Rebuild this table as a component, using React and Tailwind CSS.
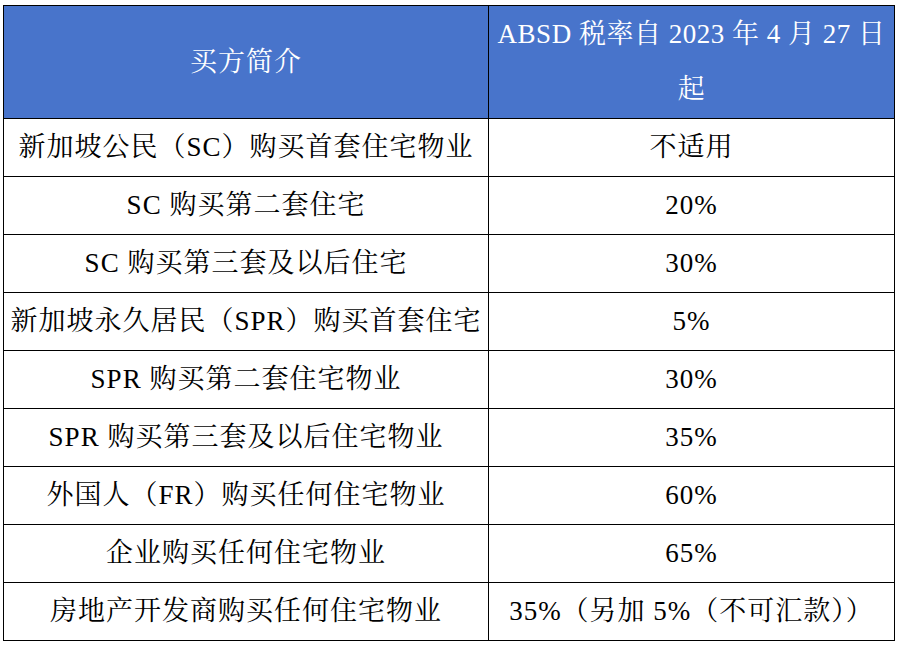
import React from 'react';

const rows = [
  ['新加坡公民（SC）购买首套住宅物业', '不适用'],
  ['SC 购买第二套住宅', '20%'],
  ['SC 购买第三套及以后住宅', '30%'],
  ['新加坡永久居民（SPR）购买首套住宅', '5%'],
  ['SPR 购买第二套住宅物业', '30%'],
  ['SPR 购买第三套及以后住宅物业', '35%'],
  ['外国人（FR）购买任何住宅物业', '60%'],
  ['企业购买任何住宅物业', '65%'],
  ['房地产开发商购买任何住宅物业', '35%（另加 5%（不可汇款））'],
];

export default function App() {
  return (
    <div className="w-[901px] h-[645px] bg-white pt-[5px] pl-[3px]">
      <table
        className="border-collapse text-[27px] tracking-[1px] text-black"
        style={{ fontFamily: '"Liberation Serif", "Noto Serif CJK SC", "Noto Sans CJK SC", serif' }}
      >
        <thead>
          <tr className="h-[113px] bg-[#4874cb] text-white">
            <th className="w-[485px] border border-black font-normal text-center">买方简介</th>
            <th className="w-[406px] border border-black font-normal text-center leading-[55px] whitespace-nowrap tracking-[0.5px]">
              ABSD 税率自 2023 年 4 月 27 日
              <br />
              起
            </th>
          </tr>
        </thead>
        <tbody>
          {rows.map(([a, b], i) => (
            <tr key={i} className="h-[58px]">
              <td className="border border-black text-center whitespace-nowrap px-1">{a}</td>
              <td className="border border-black text-center whitespace-nowrap px-1">{b}</td>
            </tr>
          ))}
        </tbody>
      </table>
    </div>
  );
}
